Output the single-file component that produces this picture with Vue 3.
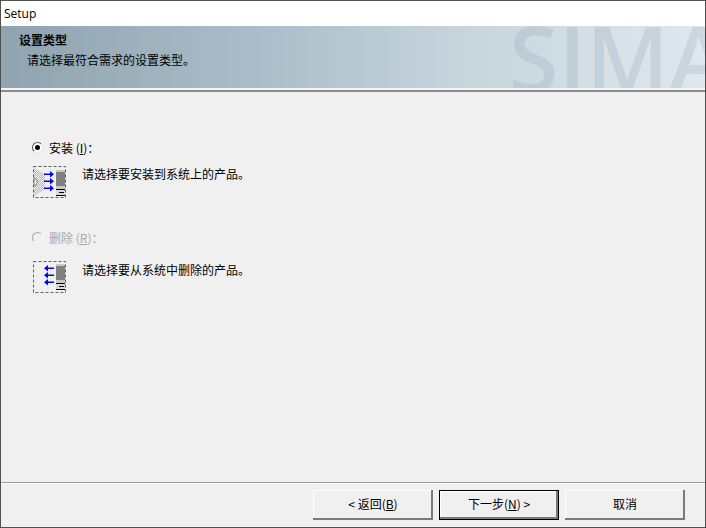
<script setup>
const options = [
  { id: 'install', label: '安装', key: 'I', checked: true, disabled: false, text: '请选择要安装到系统上的产品。', dir: 'in', shift: 1 },
  { id: 'remove', label: '删除', key: 'R', checked: false, disabled: true, text: '请选择要从系统中删除的产品。', dir: 'out', shift: 0 },
]
const arrowRows = [7, 14, 21]
</script>

<template>
  <div class="window">
    <div class="titlebar">Setup</div>
    <header class="banner">
      <span class="watermark">SIMATIC</span>
      <div class="banner-title">设置类型</div>
      <div class="banner-sub">请选择最符合需求的设置类型。</div>
    </header>
    <div class="rule"></div>
    <main class="content">
      <section v-for="o in options" :key="o.id" class="option" :class="o.id">
        <div class="radio-row" :class="{ disabled: o.disabled }">
          <span class="radio"><span v-if="o.checked" class="dot"></span></span>
          <span class="label">{{ o.label }} (<u>{{ o.key }}</u>)：</span>
        </div>
        <div class="desc-row">
          <svg class="icon" width="33" height="32" viewBox="0 0 33 32">
            <defs>
              <pattern :id="`dither-${o.id}`" width="2" height="2" patternUnits="userSpaceOnUse">
                <rect width="2" height="2" fill="#f0f0f0" />
                <rect width="1" height="1" fill="#b8b8b8" />
                <rect x="1" y="1" width="1" height="1" fill="#b8b8b8" />
              </pattern>
            </defs>
            <template v-if="o.dir === 'in'">
              <path d="M1 2 L12 8 L12 23 L1 30 Z" :fill="`url(#dither-${o.id})`" />
              <path d="M1 12 L3 13 L4.500 16 L3 19 L1 20 Z" fill="#f0f0f0" stroke="#808080" />
            </template>
            <rect x="0.500" y="0.500" width="32" height="31" fill="none" stroke="#606060" stroke-dasharray="3 2" />
            <g :transform="`translate(0 ${o.shift})`">
              <rect x="23" y="3" width="9" height="26" fill="#c8c8c8" />
              <rect x="23" y="5" width="9" height="14" fill="#808080" />
              <rect x="23" y="22" width="9" height="7" fill="#d8d8d8" />
              <path d="M23 22.500 H32 M26 25.500 H31 M23 28.500 H32" stroke="#000" />
              <g v-for="y in arrowRows" :key="y" :transform="`translate(0 ${y})`" fill="#0000ff">
                <template v-if="o.dir === 'in'">
                  <rect x="11" y="-0.500" width="8" height="1.500" />
                  <path d="M17 -3 L21 0.250 L17 3.500 Z" />
                </template>
                <template v-else>
                  <rect x="13" y="-0.500" width="8" height="1.500" />
                  <path d="M15 -3 L11 0.250 L15 3.500 Z" />
                </template>
              </g>
            </g>
          </svg>
          <span class="desc">{{ o.text }}</span>
        </div>
      </section>
    </main>
    <footer class="footer">
      <button class="btn"><span>&lt; 返回(<u>B</u>)</span></button>
      <button class="btn primary"><span>下一步(<u>N</u>) &gt;</span></button>
      <button class="btn"><span>取消</span></button>
    </footer>
  </div>
</template>

<style scoped>
.window {
  width: 706px;
  height: 528px;
  box-sizing: border-box;
  display: flex;
  flex-direction: column;
  background: #f0f0f0;
  border: 1px solid #505050;
  font-family: "Noto Sans CJK SC", "Liberation Sans", sans-serif;
  font-size: 12px;
  color: #000;
  overflow: hidden;
}
.titlebar {
  height: 25px;
  flex: none;
  background: #fff;
  font-family: "Open Sans", "Liberation Sans", sans-serif;
  font-size: 12px;
  line-height: 25px;
  padding-left: 3px;
}
.banner {
  position: relative;
  height: 62px;
  flex: none;
  box-sizing: border-box;
  padding: 0 0 0 18px;
  overflow: hidden;
  background: linear-gradient(90deg, #8fa3b0 0%, #a9bcc7 35%, #c6d4dc 65%, #e0e8ee 100%);
}
.watermark {
  position: absolute;
  left: 508px;
  top: -15px;
  font-family: "Open Sans", "Liberation Sans", sans-serif;
  font-weight: 600;
  font-size: 90px;
  line-height: 92px;
  color: #7f98a8;
  opacity: 0.2;
  white-space: nowrap;
}
.banner-title {
  font-weight: 700;
  line-height: 16px;
  margin-top: 6px;
  position: relative;
}
.banner-sub {
  line-height: 16px;
  margin-top: 4px;
  padding-left: 8px;
  position: relative;
}
.rule {
  height: 2px;
  flex: none;
  background: #f4f4f4;
  border-bottom: 2px solid #8c8c8c;
}
.content {
  flex: 1;
  border-bottom: 1px solid #a0a0a0;
  padding: 45px 0 0 31px;
}
.option {
  height: 90px;
}
.radio-row {
  display: flex;
  align-items: center;
  height: 20px;
}
.radio {
  width: 11px;
  height: 11px;
  box-sizing: border-box;
  border: 1px solid;
  border-color: #555 #e4e4e4 #e4e4e4 #555;
  border-radius: 50%;
  background: #fff;
  display: flex;
  align-items: center;
  justify-content: center;
  margin-right: 6px;
}
.dot {
  width: 5px;
  height: 5px;
  border-radius: 50%;
  background: #000;
}
.disabled .radio {
  border-color: #a8a8a8 #f8f8f8 #f8f8f8 #a8a8a8;
  background: #f0f0f0;
}
.disabled .label {
  color: #a8a8a8;
}
.desc-row {
  display: flex;
  align-items: flex-start;
  margin-top: 9px;
}
.remove .desc-row {
  margin-top: 14px;
}
.remove .desc {
  margin-top: 1px;
}
.icon {
  flex: none;
  display: block;
  margin-left: 1px;
}
.desc {
  margin-left: 16px;
  line-height: 16px;
}
.footer {
  height: 44px;
  flex: none;
  box-sizing: border-box;
  display: flex;
  gap: 6px;
  justify-content: flex-end;
  padding: 6px 20px 0 0;
  border-top: 1px solid #fff;
}
.btn {
  width: 120px;
  height: 30px;
  box-sizing: border-box;
  font: inherit;
  background: #f0f0f0;
  padding: 0 0 3px;
  border: none;
  box-shadow: inset -2px -2px 0 #7a7a7a, inset 1px 1px 0 #fff;
  color: #000;
}
.primary {
  box-shadow: inset 0 0 0 1px #000, inset -3px -3px 0 #7a7a7a, inset 2px 2px 0 #fff;
}
</style>
